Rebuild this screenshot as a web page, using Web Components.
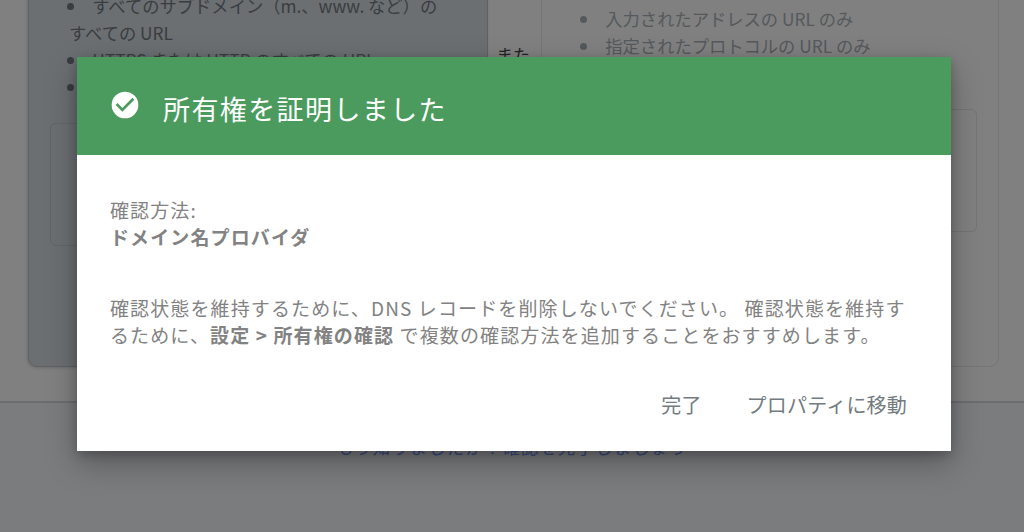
<!DOCTYPE html>
<html lang="ja">
<head>
<meta charset="utf-8">
<style>
  html, body { margin: 0; height: 100%; overflow: hidden; }
  body { font-family: "Noto Sans CJK JP", "Noto Sans", sans-serif; }
  success-dialog p { margin: 44px 0 0; }
  verify-card ul { margin: 0; list-style-position: inside; }
  verify-card[tone="blue"] ul { padding: 11px 0 23px 40px; }
  verify-card[tone="blue"] li { text-indent: -2px; }
  verify-card:not([tone]) ul { padding: 24px 0 50px 38px; }
</style>
</head>
<body>
<verify-page>
  <verify-card slot="left" tone="blue">
    <ul>
      <li>すべてのサブドメイン（m.、www. など）の<br>すべての URL</li>
      <li>HTTPS または HTTP のすべての URL</li>
      <li>ドメイン全体</li>
    </ul>
  </verify-card>
  <verify-card slot="right">
    <ul>
      <li>入力されたアドレスの URL のみ</li>
      <li>指定されたプロトコルの URL のみ</li>
    </ul>
  </verify-card>
</verify-page>
<success-dialog heading="所有権を証明しました">
  <div class="method">確認方法:<br><b>ドメイン名プロバイダ</b></div>
  <p>確認状態を維持するために、DNS レコードを削除しないでください。 確認状態を維持するために、<b>設定 &gt; 所有権の確認</b> で複数の確認方法を追加することをおすすめします。</p>
  <dialog-button slot="actions">完了</dialog-button>
  <dialog-button slot="actions">プロパティに移動</dialog-button>
</success-dialog>

<script>
class VerifyPage extends HTMLElement {
  constructor() {
    super();
    this.attachShadow({ mode: 'open' });
    this.shadowRoot.innerHTML = `
      <style>
        :host { display: block; height: 532px; background: #7b7c7e; overflow: hidden; }
        .top {
          height: 403px; box-sizing: border-box; background: #808080;
          border-bottom: 2px solid #6c6d6e;
          display: grid; grid-template-columns: 460px 53px 458px; padding-left: 28px;
          align-items: start;
        }
        .or { font-size: 17px; color: #222; padding: 46px 0 0 8px; line-height: 18px; }
        .foot {
          text-align: center; font-size: 17.3px; line-height: 20px; color: #3b4a80;
          letter-spacing: 1.25px; padding-top: 34px;
        }
      </style>
      <div class="top">
        <slot name="left"></slot>
        <div class="or">また</div>
        <slot name="right"></slot>
      </div>
      <div class="foot">もう知りましたか？確認を完了しましょう</div>
    `;
  }
}
customElements.define('verify-page', VerifyPage);

class VerifyCard extends HTMLElement {
  constructor() {
    super();
    this.attachShadow({ mode: 'open' });
    this.shadowRoot.innerHTML = `
      <style>
        :host {
          display: block; height: 387px; margin-top: -20px; box-sizing: border-box;
          border: 1px solid #747576; border-radius: 9px; background: #808080;
          color: #55595c; font-size: 17.3px; line-height: 27px;
        }
        :host([tone="blue"]) {
          background: #6b6f72; color: #3a3d40; border-color: #5f6265;
          box-shadow: -1px 1px 3px rgba(0,0,0,.15);
        }
        .inner {
          margin: 0 21px; height: 123px; box-sizing: border-box;
          border: 1px solid #747576; border-radius: 6px;
        }
        :host([tone="blue"]) .inner { border-color: #626669; }
      </style>
      <slot></slot>
      <div class="inner"></div>
    `;
  }
}
customElements.define('verify-card', VerifyCard);

class DialogButton extends HTMLElement {
  constructor() {
    super();
    this.attachShadow({ mode: 'open' });
    this.shadowRoot.innerHTML = `
      <style>
        :host { display: inline-block; font-size: 20px; letter-spacing: .2px; line-height: 28px; color: #737b80; }
      </style>
      <slot></slot>
    `;
  }
}
customElements.define('dialog-button', DialogButton);

class SuccessDialog extends HTMLElement {
  constructor() {
    super();
    this.attachShadow({ mode: 'open' });
    this.shadowRoot.innerHTML = `
      <style>
        :host {
          position: absolute; left: 77px; top: 57px; width: 874px; height: 394px;
          display: flex; flex-direction: column; background: #fff;
          box-shadow: 0 12px 30px rgba(0,0,0,.28), 0 4px 10px rgba(0,0,0,.2);
        }
        header {
          height: 98px; flex: none; background: #4b9b5e; color: #fff;
          display: flex; align-items: center; padding: 0 0 0 32px; box-sizing: border-box;
        }
        svg { width: 32px; height: 32px; flex: none; margin-top: -2px; }
        h1 {
          margin: 6px 0 0 22px; font-size: 27px; font-weight: 400; letter-spacing: 1.4px; line-height: 32px;
        }
        .body {
          flex: 1; padding: 41px 33px 0; font-size: 19px; line-height: 27px; color: #828282;
          letter-spacing: 1.12px;
        }
        footer { display: flex; justify-content: flex-end; gap: 45px; padding: 0 44px 32px 0; }
      </style>
      <header>
        <svg viewBox="0 0 24 24">
          <path fill="#fff" d="M12 2a10 10 0 1 0 0 20 10 10 0 0 0 0-20zm-2 15-5-5 1.41-1.41L10 14.17l7.59-7.59L19 8l-9 9z"/>
        </svg>
        <h1></h1>
      </header>
      <div class="body"><slot></slot></div>
      <footer><slot name="actions"></slot></footer>
    `;
    this.shadowRoot.querySelector('h1').textContent = this.getAttribute('heading');
  }
}
customElements.define('success-dialog', SuccessDialog);
</script>
</body>
</html>
